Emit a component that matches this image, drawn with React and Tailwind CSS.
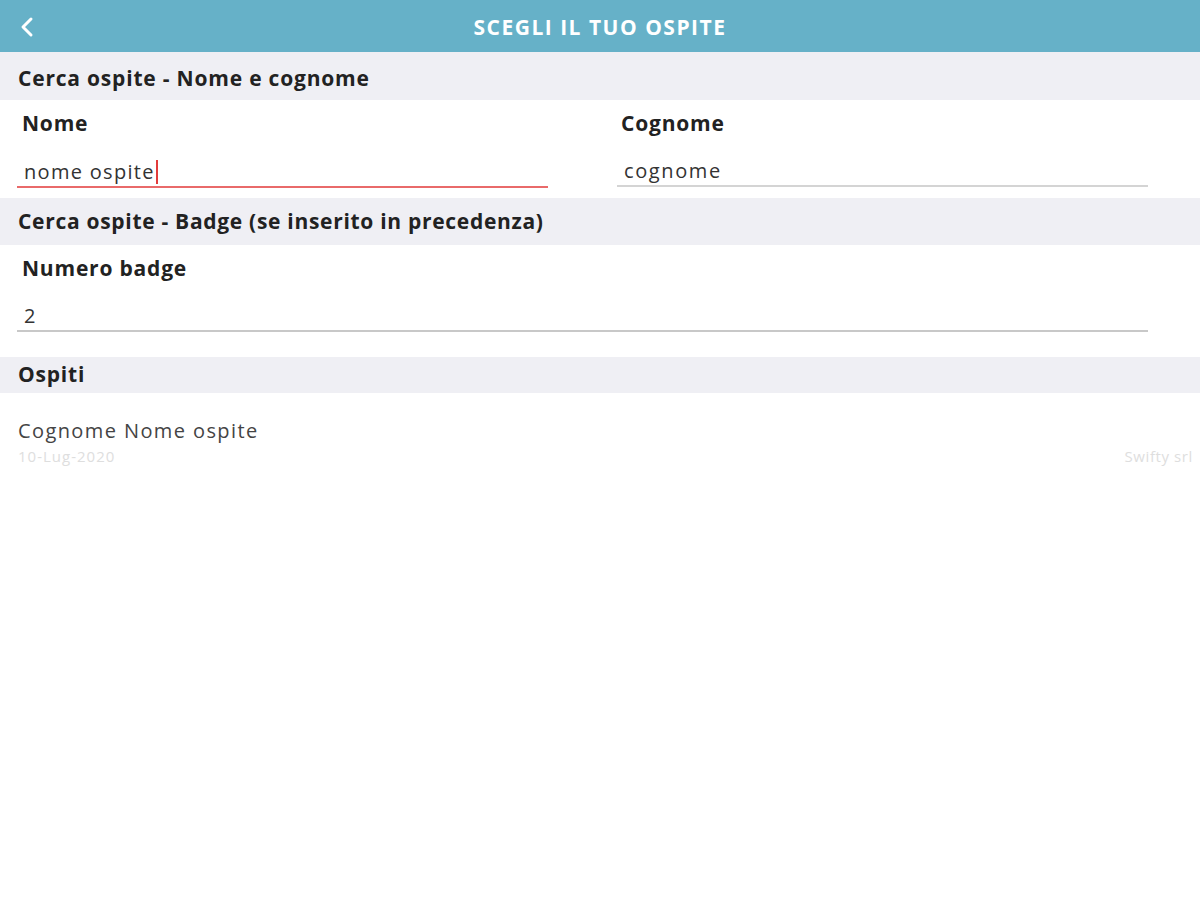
export default function App() {
  return (
    <div className="min-h-[900px] w-[1200px] bg-white font-['Open_Sans',sans-serif] text-[#222]">
      <div className="relative flex h-[52px] items-center justify-center bg-[#66b1c8] pt-[3px]">
        <svg className="absolute left-[20px] top-[16px]" width="14" height="22" viewBox="0 0 14 22" fill="none">
          <path d="M11 3 L3 11 L11 19" stroke="white" strokeWidth="3" strokeLinecap="round" strokeLinejoin="round" />
        </svg>
        <h1 className="text-[21px] font-bold tracking-[1.5px] text-white">SCEGLI IL TUO OSPITE</h1>
      </div>

      <div className="flex h-[48px] items-center bg-[#efeff4] px-[18px] pt-[5px] text-[21px] font-bold tracking-[0.8px]">
        Cerca ospite - Nome e cognome
      </div>
      <div className="grid h-[98px] grid-cols-2 gap-[69px] pl-[17px] pr-[52px]">
        <div>
          <div className="pl-[5px] pt-[11px] text-[21px] font-bold leading-[24px] tracking-[0.8px]">Nome</div>
          <div className="mt-[21px] flex h-[32px] items-center border-b-2 border-[#e96a6a] pl-[7px] pt-[1px] text-[20px] tracking-[1.3px] text-[#333]">
            nome ospite<span className="ml-[1px] inline-block h-[24px] w-[2px] bg-[#e23c3c]" />
          </div>
        </div>
        <div>
          <div className="pl-[4px] pt-[11px] text-[21px] font-bold leading-[24px] tracking-[0.8px]">Cognome</div>
          <div className="mt-[21px] flex h-[31px] items-center border-b-2 border-[#d4d4d4] pl-[7px] pt-[1px] text-[20px] tracking-[1.6px] text-[#333]">
            cognome
          </div>
        </div>
      </div>

      <div className="flex h-[47px] items-center bg-[#efeff4] px-[18px] text-[21px] font-bold tracking-[0.7px]">
        Cerca ospite - Badge (se inserito in precedenza)
      </div>
      <div className="h-[112px] pl-[17px] pr-[52px]">
        <div className="pl-[5px] pt-[11px] text-[21px] font-bold leading-[24px] tracking-[0.8px]">Numero badge</div>
        <div className="mt-[20px] flex h-[32px] items-center border-b-2 border-[#c8c8c8] pl-[7px] pt-[1px] text-[20px] text-[#333]">
          2
        </div>
      </div>

      <div className="flex h-[36px] items-center bg-[#efeff4] px-[18px] text-[21px] font-bold tracking-[0.8px]">
        Ospiti
      </div>
      <div className="px-[18px] pt-[26px]">
        <div className="text-[20px] leading-[24px] tracking-[1.4px] text-[#444]">Cognome Nome ospite</div>
        <div className="-mr-[11px] mt-[4px] flex justify-between text-[15px] leading-[18px] tracking-[1px] text-[#dedede]">
          <span>10-Lug-2020</span>
          <span className="tracking-[0.6px]">Swifty srl</span>
        </div>
      </div>
    </div>
  );
}
